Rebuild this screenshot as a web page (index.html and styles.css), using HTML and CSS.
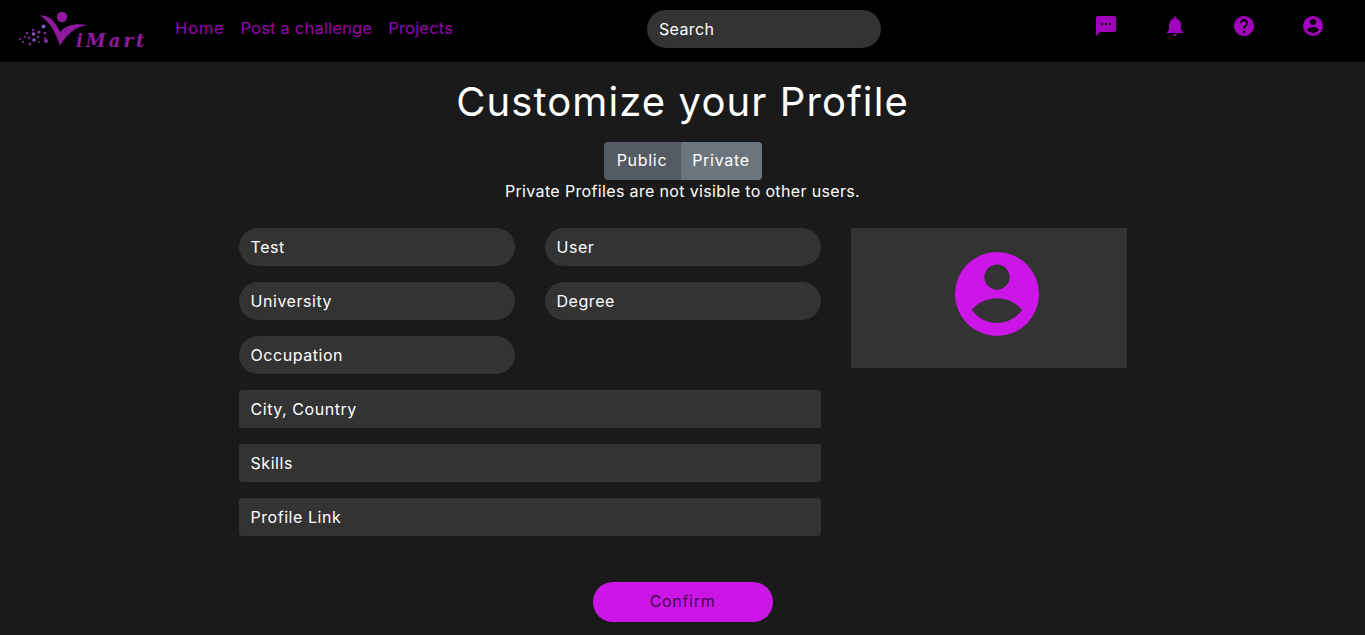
FILE: index.html
```html
<!DOCTYPE html>
<html lang="en">
<head>
<meta charset="utf-8">
<title>iMart - Customize your Profile</title>
<link rel="stylesheet" href="styles.css">
</head>
<body>
<header class="topbar">
  <div class="brand-nav">
    <svg class="logo" viewBox="0 0 132 38" width="132" height="38">
      <circle cx="44" cy="5" r="5.200" fill="#8f1a9f"/>
      <path d="M22 3.500C30 2.500 37 8 42 20C48 13 57 11 69 13C58 15 50 21 42 33.500C38 21 32 10 22 3.500Z" fill="#8f1a9f"/>
      <g fill="#8a2aa8">
        <circle cx="25.500" cy="14.500" r="2" fill="#8458c0"/><circle cx="15" cy="18" r="1.200"/><circle cx="21" cy="20" r="1.600"/><circle cx="27" cy="21" r="1.300"/>
        <circle cx="9" cy="21" r="1.200"/><circle cx="15.500" cy="22" r="1.800" fill="#8458c0"/><circle cx="20" cy="25" r="1.300"/><circle cx="27" cy="26" r="1"/>
        <circle cx="2" cy="27" r="1.100"/><circle cx="7" cy="25" r="1.100"/><circle cx="11" cy="26" r="1.200"/><circle cx="16" cy="28" r="1.800" fill="#8458c0"/>
        <circle cx="21" cy="30" r="1"/><circle cx="28" cy="29" r="2"/><circle cx="12" cy="32" r="1.200"/><circle cx="5" cy="30" r="1"/>
      </g>
      <text class="logo-text" x="58" y="35">iMart</text>
    </svg>
    <nav class="nav">
      <a class="nav-link" href="#">Home</a>
      <a class="nav-link" href="#">Post a challenge</a>
      <a class="nav-link" href="#">Projects</a>
    </nav>
  </div>
  <input class="search" type="text" placeholder="Search">
  <div class="icons">
    <svg class="icon" viewBox="0 0 24 24"><path d="M20 2H4c-1.100 0-1.990.9-1.990 2L2 22l4-4h14c1.100 0 2-.9 2-2V4c0-1.100-.9-2-2-2zM9 11H7V9h2v2zm4 0h-2V9h2v2zm4 0h-2V9h2v2z"/></svg>
    <svg class="icon" viewBox="0 0 24 24"><path d="M12 22c1.100 0 2-.9 2-2h-4c0 1.100.89 2 2 2zm6-6v-5c0-3.070-1.640-5.640-4.500-6.320V4c0-.83-.67-1.500-1.500-1.500s-1.500.67-1.500 1.500v.68C7.630 5.360 6 7.920 6 11v5l-2 2v1h16v-1l-2-2z"/></svg>
    <svg class="icon" viewBox="0 0 24 24"><path d="M12 2C6.480 2 2 6.480 2 12s4.480 10 10 10 10-4.480 10-10S17.520 2 12 2zm1 17h-2v-2h2v2zm2.070-7.750l-.9.92C13.450 12.900 13 13.500 13 15h-2v-.5c0-1.100.45-2.100 1.170-2.830l1.240-1.260c.37-.36.59-.86.59-1.410 0-1.100-.9-2-2-2s-2 .9-2 2H8c0-2.210 1.790-4 4-4s4 1.790 4 4c0 .88-.36 1.680-.93 2.250z"/></svg>
    <svg class="icon" viewBox="0 0 24 24"><path fill-rule="evenodd" d="M12 2a10 10 0 1 0 0 20a10 10 0 1 0 0-20zM12 5a3 3 0 1 1 0 6a3 3 0 1 1 0-6zM6 15.800C7.300 14.200 9.400 13 12 13s4.700 1.200 6 2.800C16.500 17.700 14.500 18.900 12 18.900S7.500 17.700 6 15.800z"/></svg>
  </div>
</header>
<main class="page">
  <h1 class="title">Customize your Profile</h1>
  <div class="toggle">
    <button class="toggle-btn" type="button">Public</button>
    <button class="toggle-btn toggle-active" type="button">Private</button>
  </div>
  <p class="note">Private Profiles are not visible to other users.</p>
  <div class="form-area">
    <form class="fields">
      <input class="field pill" type="text" value="Test">
      <input class="field pill" type="text" value="User">
      <input class="field pill" type="text" placeholder="University">
      <input class="field pill" type="text" placeholder="Degree">
      <input class="field pill" type="text" placeholder="Occupation">
      <input class="field wide" type="text" placeholder="City, Country">
      <input class="field wide" type="text" placeholder="Skills">
      <input class="field wide" type="text" placeholder="Profile Link">
    </form>
    <div class="avatar-box">
      <svg class="avatar" viewBox="2 2 20 20"><path fill-rule="evenodd" d="M12 2a10 10 0 1 0 0 20a10 10 0 1 0 0-20zM12 5a3 3 0 1 1 0 6a3 3 0 1 1 0-6zM6 15.800C7.300 14.200 9.400 13 12 13s4.700 1.200 6 2.800C16.500 17.700 14.500 18.900 12 18.900S7.500 17.700 6 15.800z"/></svg>
    </div>
  </div>
  <button class="confirm" type="button">Confirm</button>
</main>
</body>
</html>
```
FILE: styles.css
```css
* { box-sizing: border-box; }
html, body { margin: 0; height: 100%; }
body {
  background: #1a1a1a;
  color: #fff;
  font-family: "Inter", "Liberation Sans", sans-serif;
  font-size: 16px;
  letter-spacing: 0.35px;
  overflow: hidden;
}
.topbar {
  display: grid;
  grid-template-columns: 629px 234px 1fr;
  align-items: center;
  height: 62px;
  background: #000;
  padding: 0 40px 4px 18px;
}
.brand-nav { display: flex; align-items: center; }
.logo { display: block; margin-top: 4px; }
.logo-text {
  font-family: "DejaVu Serif", serif;
  font-style: italic;
  font-weight: 700;
  font-size: 18px;
  letter-spacing: 3px;
  fill: #8f1a9f;
}
.nav { display: flex; gap: 16px; margin: 0 0 2px 25px; }
.nav-link { color: #9a00b0; text-decoration: none; font-size: 16.500px; letter-spacing: 0.2px; }
.nav-link:first-child { letter-spacing: 0.8px; }
.search {
  width: 234px;
  height: 38px;
  border: 0;
  border-radius: 19px;
  background: #333;
  padding: 0 12px;
  color: #fff;
  font: inherit;
  letter-spacing: inherit;
}
.search::placeholder, .field::placeholder { color: #fff; opacity: 1; }
.icons { display: flex; justify-content: flex-end; gap: 45px; margin-bottom: 6px; }
.icon { width: 24px; height: 24px; fill: #a100bd; display: block; }
.page { display: flex; flex-direction: column; align-items: center; }
.title { margin: 16px 0 0; font-size: 40px; line-height: 48px; font-weight: 400; letter-spacing: 1.100px; }
.toggle { display: flex; margin-top: 16px; height: 38px; border-radius: 4px; overflow: hidden; }
.toggle-btn {
  border: 0;
  background: #545b62;
  color: #fff;
  font: inherit;
  letter-spacing: 0.7px;
  padding: 0 0 2px;
  width: 77px;
}
.toggle-active { background: #6c757d; width: 81px; }
.note { margin: 0; line-height: 22px; }
.form-area {
  display: flex;
  gap: 30px;
  margin-top: 26px;
  width: 888px;
  align-items: flex-start;
}
.fields {
  display: grid;
  grid-template-columns: 276px 276px;
  column-gap: 30px;
  row-gap: 16px;
  width: 582px;
}
.field {
  height: 38px;
  border: 0;
  background: #333;
  color: #fff;
  padding: 0 12px;
  font: inherit;
  letter-spacing: 0.55px;
}
.pill { border-radius: 19px; }
.wide { grid-column: 1 / -1; border-radius: 3px; }
.avatar-box {
  display: flex;
  align-items: flex-start;
  justify-content: center;
  width: 276px;
  height: 140px;
  padding: 24px 0 0 16px;
  background: #333;
}
.avatar { width: 84px; height: 84px; fill: #cc16e8; display: block; }
.confirm {
  margin-top: 46px;
  width: 180px;
  height: 40px;
  padding: 0 0 2px;
  border: 0;
  border-radius: 20px;
  background: #cc16e8;
  color: #3f0848;
  font: inherit;
  letter-spacing: 0.7px;
}
```
